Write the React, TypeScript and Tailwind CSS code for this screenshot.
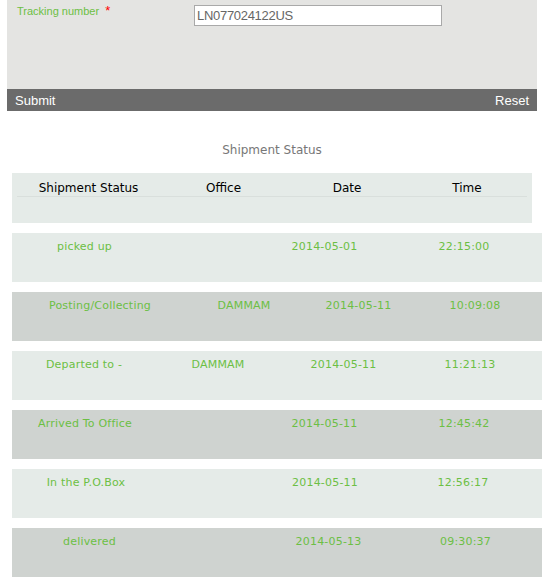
import React from 'react';

const rows = [
  { status: 'picked up', office: '', date: '2014-05-01', time: '22:15:00', cols: 'grid-cols-[145px_106px_123px_156px]', dark: false },
  { status: 'Posting/Collecting', office: 'DAMMAM', date: '2014-05-11', time: '10:09:08', cols: 'grid-cols-[176px_112px_117px_116px]', dark: true },
  { status: 'Departed to -', office: 'DAMMAM', date: '2014-05-11', time: '11:21:13', cols: 'grid-cols-[144px_124px_127px_126px]', dark: false },
  { status: 'Arrived To Office', office: '', date: '2014-05-11', time: '12:45:42', cols: 'grid-cols-[146px_105px_123px_156px]', dark: true },
  { status: 'In the P.O.Box', office: '', date: '2014-05-11', time: '12:56:17', cols: 'grid-cols-[148px_103px_124px_152px]', dark: false },
  { status: 'delivered', office: '', date: '2014-05-13', time: '09:30:37', cols: 'grid-cols-[155px_99px_125px_149px]', dark: true }
];

export default function App() {
  return (
    <div className="w-[544px] h-[581px] bg-white overflow-hidden font-['DejaVu_Sans',sans-serif]">
      {/* Tracking form */}
      <div className="ml-[7px] w-[530px]">
        <div className="h-[89px] bg-[#e4e4e2] flex items-start">
          <div className="w-[187px] pl-[10px] pt-[4px] text-[11px] leading-[14px] text-[#6cbf44] font-['Liberation_Sans',sans-serif]">
            Tracking number <span className="ml-[3px] text-[#ff0000] text-[13px]">*</span>
          </div>
          <div className="mt-[5px] w-[248px] h-[21px] border border-[#a9a9a9] bg-white pl-[2px] text-[13px] leading-[19px] tracking-[-0.3px] text-[#666] font-['Liberation_Sans',sans-serif]">
            LN077024122US
          </div>
        </div>
        <div className="h-[22px] pt-[1px] bg-[#6b6b6b] flex items-center justify-between px-[8px] text-[13px] text-white font-['Liberation_Sans',sans-serif]">
          <span>Submit</span>
          <span>Reset</span>
        </div>
      </div>

      {/* Title */}
      <div className="mt-[31px] text-center text-[12px] leading-[16px] text-[#777]">Shipment Status</div>

      {/* Header table */}
      <div className="mt-[15px] ml-[12px] w-[520px] h-[50px] bg-[#e5ebe8] px-[5px] pt-[7px]">
        <div className="grid grid-cols-[143px_127px_120px_120px] text-[12px] leading-[16px] text-black text-center border-b border-[#d9dfdc]">
          <span>Shipment Status</span>
          <span>Office</span>
          <span>Date</span>
          <span>Time</span>
        </div>
      </div>

      {/* Rows */}
      <div className="mt-[10px] ml-[12px] w-[530px] flex flex-col gap-[10px]">
        {rows.map((r, i) => (
          <div key={i} className={`h-[49px] pt-[7px] ${r.dark ? 'bg-[#cfd3d0]' : 'bg-[#e5ebe8]'}`}>
            <div className={`grid ${r.cols} text-center text-[11px] leading-[14px] tracking-[0.2px] text-[#6cbf44]`}>
              <span>{r.status}</span>
              <span>{r.office}</span>
              <span>{r.date}</span>
              <span>{r.time}</span>
            </div>
          </div>
        ))}
      </div>
    </div>
  );
}
